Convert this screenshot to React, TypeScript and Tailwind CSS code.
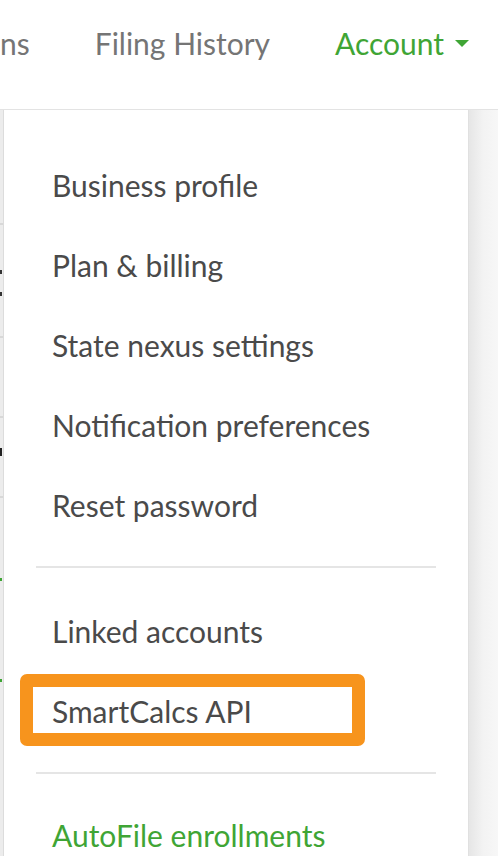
import React from "react";

const font = { fontFamily: "Lato, 'Open Sans', sans-serif" };

function Item({ children, green }: { children: React.ReactNode; green?: boolean }) {
  return (
    <div
      className={`h-[80px] shrink-0 flex items-center pl-[48px] text-[30px] leading-[36px] whitespace-nowrap ${green ? "text-[#3fa535]" : "text-[#4a4a4a]"}`}
    >
      {children}
    </div>
  );
}

export default function App() {
  return (
    <div className="w-[498px] h-[856px] overflow-hidden bg-white flex flex-col" style={font}>
      <div className="h-[110px] shrink-0 bg-white border-b border-[#e3e3e3] pt-[25px] text-[30px] leading-[36px] whitespace-nowrap overflow-hidden">
        <div className="flex items-center ml-[0px]">
          <span className="text-[#757575]">ns</span>
          <span className="text-[#757575] ml-[65px]">Filing History</span>
          <span className="text-[#3fa535] ml-[65px] flex items-center">
            Account
            <svg width="14" height="8" viewBox="0 0 14 8" className="ml-[11px] mt-[2px]">
              <path d="M0 0 L14 0 L7 7 Z" fill="#3fa535" />
            </svg>
          </span>
        </div>
      </div>
      <div className="flex flex-1 min-h-0">
        <div className="w-[3px] shrink-0 bg-[#ececec] flex flex-col">
          <div className="h-[113px] shrink-0" />
          <div className="h-[2px] shrink-0 bg-[#d8d8d8]" />
          <div className="h-[45px] shrink-0" />
          <div className="h-[4px] w-[2px] shrink-0 bg-[#333]" />
          <div className="h-[18px] shrink-0" />
          <div className="h-[4px] w-[2px] shrink-0 bg-[#333]" />
          <div className="h-[40px] shrink-0" />
          <div className="h-[2px] shrink-0 bg-[#d8d8d8]" />
          <div className="h-[78px] shrink-0" />
          <div className="h-[2px] shrink-0 bg-[#d8d8d8]" />
          <div className="h-[30px] shrink-0" />
          <div className="h-[8px] w-[2px] shrink-0 bg-[#222]" />
          <div className="h-[40px] shrink-0" />
          <div className="h-[2px] shrink-0 bg-[#d8d8d8]" />
          <div className="h-[80px] shrink-0" />
          <div className="h-[3px] w-[2px] shrink-0 bg-[#3fa535]" />
          <div className="h-[98px] shrink-0" />
          <div className="h-[3px] w-[2px] shrink-0 bg-[#3fa535]" />
        </div>
        <div className="w-[465px] shrink-0 bg-white border-l border-[#dcdcdc] flex flex-col pt-[35px] overflow-hidden">
          <Item>Business profile</Item>
          <Item>Plan &amp; billing</Item>
          <Item>State nexus settings</Item>
          <Item>Notification preferences</Item>
          <Item>Reset password</Item>
          <div className="shrink-0 mt-[21px] mb-[23px] ml-[32px] w-[400px] h-[2px] bg-[#e5e5e5]" />
          <Item>Linked accounts</Item>
          <div className="shrink-0 mt-[3px] ml-[16px] w-[345px] h-[72px] rounded-[7px] border-[13px] border-[#f7941d] flex items-center pl-[19px] pt-[2px] text-[30px] leading-[36px] text-[#4a4a4a] box-border whitespace-nowrap">
            SmartCalcs API
          </div>
          <div className="shrink-0 mt-[26px] mb-[21px] ml-[32px] w-[400px] h-[2px] bg-[#e5e5e5]" />
          <Item green>AutoFile enrollments</Item>
        </div>
        <div className="flex-1 bg-gradient-to-r from-[#e6e6e6] via-[#f3f3f3] to-[#f7f7f7] border-l border-[#e0e0e0]" />
      </div>
    </div>
  );
}
